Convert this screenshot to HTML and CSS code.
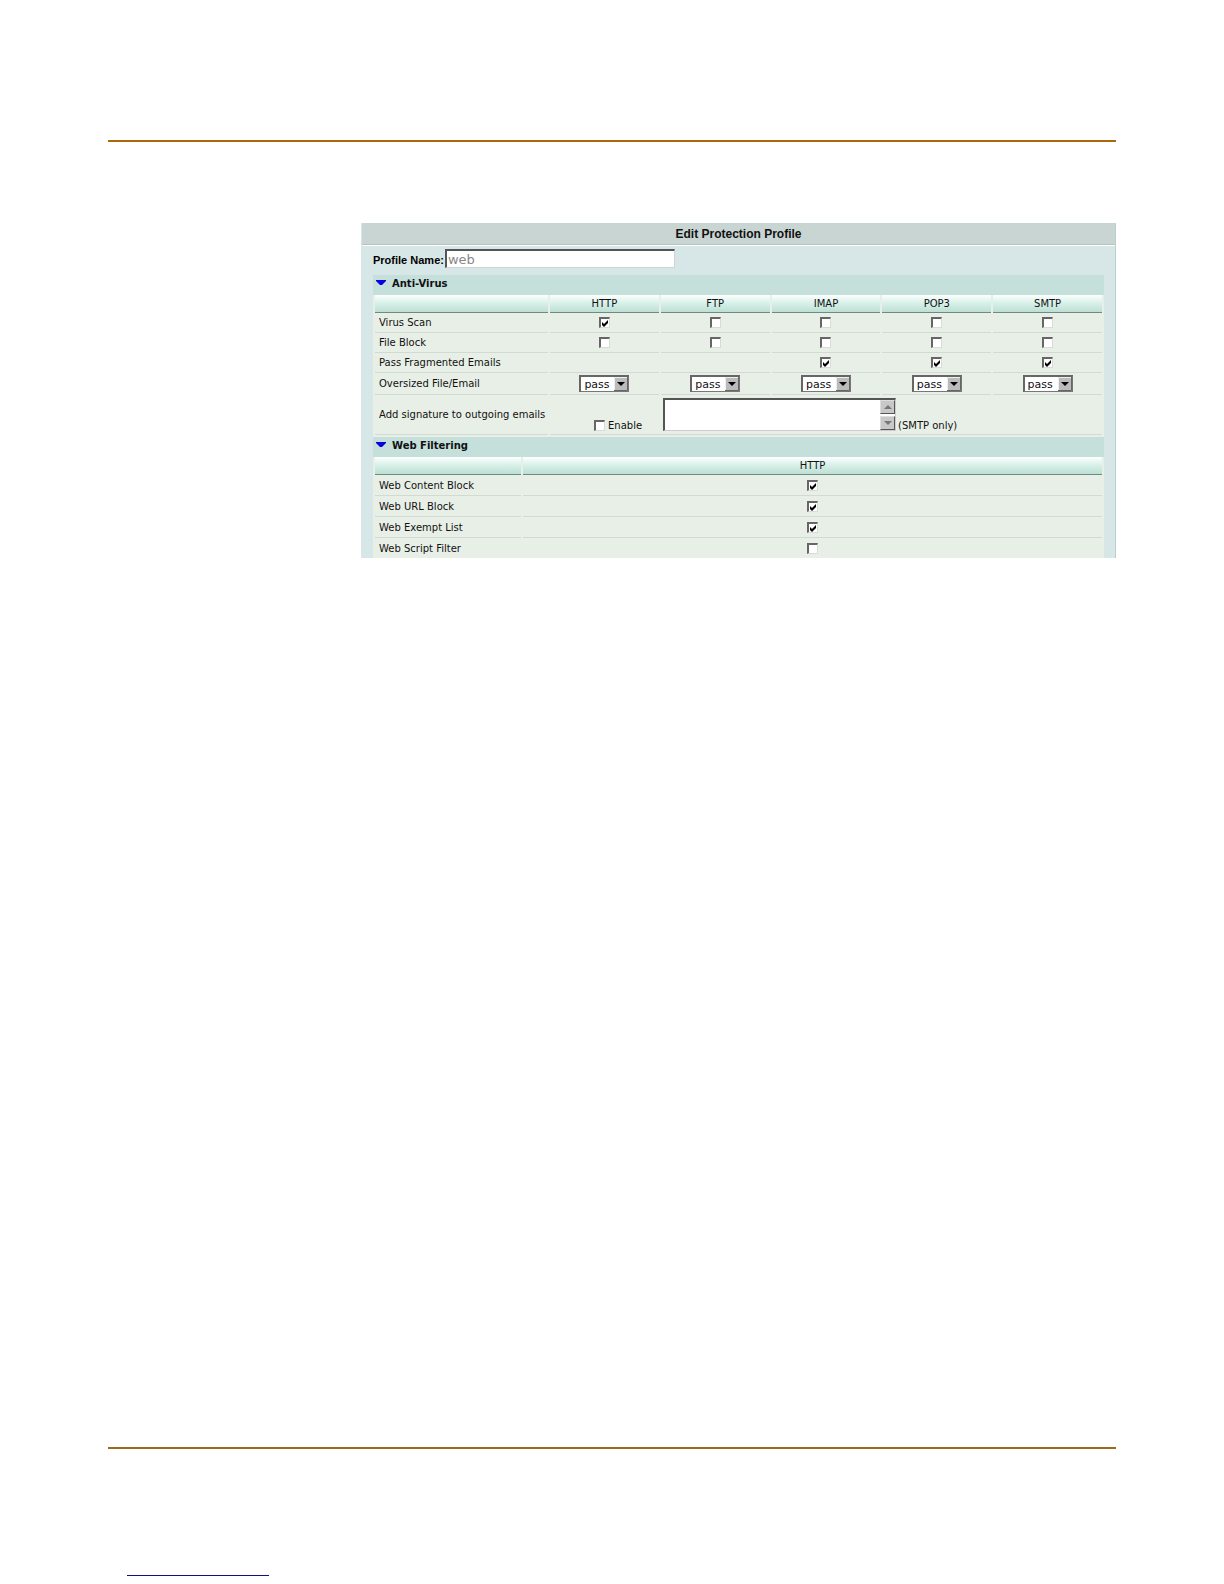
FILE: index.html
```html
<!DOCTYPE html>
<html lang="en">
<head>
    <meta charset="UTF-8">
    <meta name="viewport" content="width=device-width, initial-scale=1.0">
    <title>Edit Protection Profile</title>
    <link rel="stylesheet" href="styles.css">
</head>
<body>
    <div class="page">
        <hr class="rule">
        <form class="panel">
            <h1>Edit Protection Profile</h1>
            <div class="profile-name">
                <label for="profileName">Profile Name:</label>
                <input type="text" id="profileName" value="web" disabled>
            </div>
            <div class="sections">
                <h2><svg class="arrow" viewBox="0 0 10 6"><path d="M0 0H10V1L6 5H4L0 1Z"/></svg>Anti-Virus</h2>
                <table class="options anti-virus">
                    <thead>
                        <tr>
                            <th class="name"></th>
                            <th>HTTP</th>
                            <th>FTP</th>
                            <th>IMAP</th>
                            <th>POP3</th>
                            <th>SMTP</th>
                        </tr>
                    </thead>
                    <tbody>
                        <tr>
                            <td>Virus Scan</td>
                            <td><input type="checkbox" aria-label="Virus Scan HTTP" checked></td>
                            <td><input type="checkbox" aria-label="Virus Scan FTP"></td>
                            <td><input type="checkbox" aria-label="Virus Scan IMAP"></td>
                            <td><input type="checkbox" aria-label="Virus Scan POP3"></td>
                            <td><input type="checkbox" aria-label="Virus Scan SMTP"></td>
                        </tr>
                        <tr>
                            <td>File Block</td>
                            <td><input type="checkbox" aria-label="File Block HTTP"></td>
                            <td><input type="checkbox" aria-label="File Block FTP"></td>
                            <td><input type="checkbox" aria-label="File Block IMAP"></td>
                            <td><input type="checkbox" aria-label="File Block POP3"></td>
                            <td><input type="checkbox" aria-label="File Block SMTP"></td>
                        </tr>
                        <tr>
                            <td>Pass Fragmented Emails</td>
                            <td></td>
                            <td></td>
                            <td><input type="checkbox" aria-label="Pass Fragmented Emails IMAP" checked></td>
                            <td><input type="checkbox" aria-label="Pass Fragmented Emails POP3" checked></td>
                            <td><input type="checkbox" aria-label="Pass Fragmented Emails SMTP" checked></td>
                        </tr>
                        <tr class="oversized-row">
                            <td>Oversized File/Email</td>
                            <td><select aria-label="Oversized HTTP"><option>pass</option><option>block</option></select></td>
                            <td><select aria-label="Oversized FTP"><option>pass</option><option>block</option></select></td>
                            <td><select aria-label="Oversized IMAP"><option>pass</option><option>block</option></select></td>
                            <td><select aria-label="Oversized POP3"><option>pass</option><option>block</option></select></td>
                            <td><select aria-label="Oversized SMTP"><option>pass</option><option>block</option></select></td>
                        </tr>
                        <tr class="signature-row">
                            <td>Add signature to outgoing emails</td>
                            <td colspan="5">
                                <div class="signature">
                                    <label class="enable"><input type="checkbox">Enable</label>
                                    <div class="signature-box">
                                        <textarea aria-label="Signature"></textarea>
                                        <div class="scroll">
                                            <button type="button" aria-label="Scroll up"><svg viewBox="0 0 8 4"><path d="M0 4L4 0L8 4Z"/></svg></button>
                                            <button type="button" aria-label="Scroll down"><svg viewBox="0 0 8 4"><path d="M0 0L4 4L8 0Z"/></svg></button>
                                        </div>
                                    </div>
                                    <span>(SMTP only)</span>
                                </div>
                            </td>
                        </tr>
                    </tbody>
                </table>
                <h2><svg class="arrow" viewBox="0 0 10 6"><path d="M0 0H10V1L6 5H4L0 1Z"/></svg>Web Filtering</h2>
                <table class="options web-filtering">
                    <thead>
                        <tr>
                            <th class="name"></th>
                            <th>HTTP</th>
                        </tr>
                    </thead>
                    <tbody>
                        <tr>
                            <td><label for="contentBlock">Web Content Block</label></td>
                            <td><input type="checkbox" id="contentBlock" checked></td>
                        </tr>
                        <tr>
                            <td><label for="urlBlock">Web URL Block</label></td>
                            <td><input type="checkbox" id="urlBlock" checked></td>
                        </tr>
                        <tr>
                            <td><label for="exemptList">Web Exempt List</label></td>
                            <td><input type="checkbox" id="exemptList" checked></td>
                        </tr>
                        <tr>
                            <td><label for="scriptFilter">Web Script Filter</label></td>
                            <td><input type="checkbox" id="scriptFilter"></td>
                        </tr>
                    </tbody>
                </table>
            </div>
        </form>
        <div class="footer">
            <hr class="rule">
            <hr class="link-line">
        </div>
    </div>
</body>
</html>
```
FILE: styles.css
```css
* {
    box-sizing: border-box;
}
body {
    margin: 0;
    background-color: #fff;
    color: #111;
    font-family: Verdana, "DejaVu Sans", sans-serif;
    font-size: 10px;
}
.page {
    display: flex;
    flex-direction: column;
    min-height: 100vh;
    padding: 140px 108px 8px;
}
.rule {
    width: 100%;
    height: 2px;
    margin: 0;
    border: 0;
    background-color: #ae660d;
}
.panel {
    margin: 81px 0 40px 253px;
    background-color: #d7e6e6;
    border-left: 1px solid #d7e6e6;
    border-right: 1px solid #b9d0c9;
}
h1 {
    height: 22px;
    margin: 0;
    background-color: #c8d5d3;
    border-bottom: 1px solid #b4c4c1;
    font: bold 12px/22px "Liberation Sans", Arial, sans-serif;
    text-align: center;
}
.profile-name {
    display: flex;
    align-items: flex-start;
    gap: 1px;
    height: 30px;
    padding: 3px 11px 0;
    border-top: 1px solid #fff;
}
.profile-name label {
    font: bold 11px/22px "Liberation Sans", Arial, sans-serif;
    color: #000;
}
.profile-name input {
    width: 230px;
    height: 19px;
    padding: 0 1px;
    background-color: #fff;
    border: 1px solid #d0d4d2;
    border-top: 2px solid #555;
    border-left: 2px solid #555;
    color: #888;
    font: 13px "DejaVu Sans", sans-serif;
}
.sections {
    margin: 0 11px;
    background-color: #e8efe7;
}
h2 {
    display: flex;
    align-items: center;
    gap: 6px;
    height: 20px;
    margin: 0;
    padding: 0 3px 4px;
    background-color: #c5dfdb;
    font-size: 10px;
}
.arrow {
    width: 10px;
    height: 6px;
    fill: #0a00e0;
}
.options {
    width: 100%;
    table-layout: fixed;
    border-collapse: separate;
    border-spacing: 2px 0;
}
.options th {
    height: 18px;
    padding: 0;
    background-image: linear-gradient(#fff, #dcf3ec 40%, #bddfd4);
    border-bottom: 1px solid #6e8a82;
    font-weight: normal;
}
.anti-virus .name {
    width: 173px;
}
.web-filtering .name {
    width: 146px;
}
.options td {
    height: 20px;
    padding: 0;
    border-bottom: 1px solid #d2dad3;
    text-align: center;
}
.options td:first-child {
    padding-left: 4px;
    text-align: left;
    white-space: nowrap;
}
.web-filtering td {
    height: 21px;
}
.web-filtering tr:last-child td {
    height: 20px;
    border-bottom: 0;
}
input[type="checkbox"] {
    appearance: none;
    display: inline-block;
    width: 11px;
    height: 11px;
    margin: 0;
    background-color: #fff;
    border: 1px solid #d8dcd8;
    border-top: 2px solid #666;
    border-left: 2px solid #666;
    vertical-align: middle;
}
input[type="checkbox"]:checked {
    background-image: url("data:image/svg+xml,%3Csvg xmlns='http://www.w3.org/2000/svg' viewBox='0 0 8 8'%3E%3Cpath d='M1 3L3 5L7 1V4L3 8L1 6Z'/%3E%3C/svg%3E");
    background-size: 8px 8px;
}
select {
    appearance: none;
    display: inline-block;
    width: 50px;
    height: 17px;
    padding: 0 0 0 3px;
    background: #fff url("data:image/svg+xml,%3Csvg xmlns='http://www.w3.org/2000/svg' viewBox='0 0 14 14'%3E%3Cpath fill='%23bbb' d='M0 0H14V14H0Z'/%3E%3Cpath fill='none' stroke='%23666' d='M0 13.5H13.5V0'/%3E%3Cpath fill='none' stroke='%23eee' d='M.5 13V.5H13'/%3E%3Cpath d='M3 5H11L7 9Z'/%3E%3C/svg%3E") right center / 14px 14px no-repeat;
    border: 1px solid #777;
    border-top: 2px solid #666;
    border-left: 2px solid #666;
    border-radius: 0;
    color: #111;
    font: 11px "DejaVu Sans", sans-serif;
    vertical-align: middle;
}
.options .oversized-row td {
    height: 22px;
}
.options .signature-row td {
    height: 40px;
}
.anti-virus {
    padding-bottom: 2px;
}
.signature {
    display: flex;
    align-items: flex-end;
    gap: 2px;
    padding-left: 44px;
}
.enable {
    display: flex;
    align-items: center;
    gap: 3px;
    width: 67px;
}
.signature-box {
    display: flex;
    width: 233px;
    height: 33px;
    background-color: #fff;
    border: 1px solid #ccc;
    border-top: 2px solid #555;
    border-left: 2px solid #555;
}
.signature-box textarea {
    flex: 1;
    min-width: 0;
    padding: 0;
    border: 0;
    resize: none;
}
.scroll {
    display: flex;
    flex-direction: column;
    justify-content: space-between;
}
.scroll button {
    display: flex;
    align-items: center;
    justify-content: center;
    width: 15px;
    height: 14px;
    padding: 0;
    background-color: #c8c8c8;
    border: 1px solid #ddd;
    border-right-color: #555;
    border-bottom-color: #555;
}
.scroll svg {
    width: 8px;
    height: 4px;
    fill: #777;
}
.footer {
    margin-top: auto;
}
.footer .rule {
    background-color: #9a6a1e;
}
.link-line {
    width: 142px;
    height: 1px;
    margin: 126px 0 0 19px;
    border: 0;
    background-color: #0b1480;
}
```
